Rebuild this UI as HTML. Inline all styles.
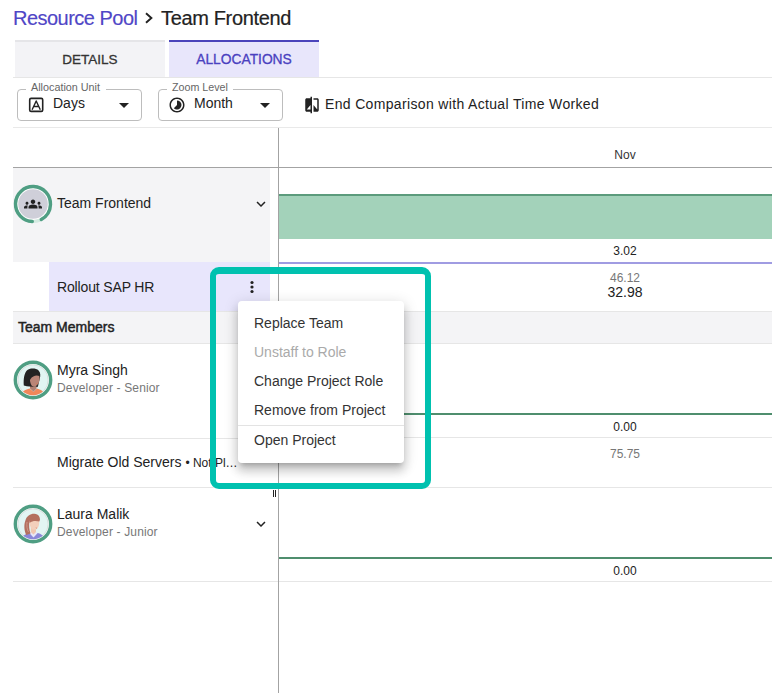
<!DOCTYPE html>
<html><head><meta charset="utf-8">
<style>
*{box-sizing:border-box;margin:0;padding:0}
html,body{width:772px;height:693px;overflow:hidden;background:#fff}
body{position:relative;font-family:"Liberation Sans",sans-serif;color:#222}
.a{position:absolute}
.t{position:absolute;white-space:nowrap;line-height:20px}
.hl{position:absolute;height:1px;background:#e6e6e6}
</style></head><body>

<!-- breadcrumb -->
<div class="t" style="left:13px;top:6px;font-size:20px;line-height:24px;letter-spacing:-0.52px;color:#4f46c6;-webkit-text-stroke:0.15px #4f46c6">Resource Pool</div>
<svg class="a" style="left:143px;top:10px" width="12" height="16" viewBox="0 0 12 16"><path d="M3 3.2 L8.4 8 L3 12.8" fill="none" stroke="#222" stroke-width="1.9"/></svg>
<div class="t" style="left:161px;top:6px;font-size:20px;line-height:24px;letter-spacing:-0.35px;color:#222;-webkit-text-stroke:0.2px #222">Team Frontend</div>

<!-- tabs -->
<div class="a" style="left:15px;top:40px;width:150px;height:37px;background:#f3f3f6;border-top:2px solid #e5e5e8"></div>
<div class="t" style="left:15px;top:50px;width:150px;text-align:center;font-size:13.5px;color:#333;-webkit-text-stroke:0.3px #333">DETAILS</div>
<div class="a" style="left:169px;top:40px;width:150px;height:37px;background:#e8e6fb;border-top:2px solid #4b44bb"></div>
<div class="t" style="left:169px;top:50px;width:150px;text-align:center;font-size:13.8px;color:#4a41c0;-webkit-text-stroke:0.3px #4a41c0">ALLOCATIONS</div>
<div class="hl" style="left:13px;top:77px;width:759px;background:#e6e6e6"></div>

<!-- toolbar -->
<div class="a" style="left:17px;top:89px;width:125px;height:32px;border:1px solid #bdbdbd;border-radius:4px"></div>
<div class="a" style="left:26px;top:85px;width:80px;height:8px;background:#fff"></div>
<div class="t" style="left:31px;top:78.5px;font-size:10.8px;line-height:16px;color:#666">Allocation Unit</div>
<svg class="a" style="left:27px;top:96px" width="18" height="18" viewBox="0 0 18 18"><rect x="2.7" y="2.4" width="13" height="13" rx="1.4" fill="none" stroke="#222" stroke-width="1.6"/><path d="M5.1 13.7 L9.2 5 L13.3 13.7 M6.7 10.5 H11.7" fill="none" stroke="#222" stroke-width="1.4" stroke-linejoin="round"/></svg>
<div class="t" style="left:53px;top:93px;font-size:14px;color:#222">Days</div>
<svg class="a" style="left:119px;top:103px" width="10" height="5" viewBox="0 0 10 5"><path d="M0 0 L10 0 L5 5z" fill="#222"/></svg>

<div class="a" style="left:158px;top:89px;width:125px;height:32px;border:1px solid #bdbdbd;border-radius:4px"></div>
<div class="a" style="left:167px;top:85px;width:66px;height:8px;background:#fff"></div>
<div class="t" style="left:172px;top:78.5px;font-size:10.7px;line-height:16px;color:#666">Zoom Level</div>
<svg class="a" style="left:168px;top:96px" width="18" height="18" viewBox="0 0 24 24"><path fill="#222" d="M16.24 7.76C15.07 6.59 13.54 6 12 6v6l-4.24 4.24c2.34 2.34 6.14 2.34 8.49 0 2.34-2.34 2.34-6.14-.01-8.48zM12 2C6.48 2 2 6.48 2 12s4.48 10 10 10 10-4.48 10-10S17.52 2 12 2zm0 18c-4.42 0-8-3.58-8-8s3.58-8 8-8 8 3.58 8 8-3.58 8-8 8z"/></svg>
<div class="t" style="left:194px;top:93px;font-size:14px;color:#222">Month</div>
<svg class="a" style="left:260px;top:103px" width="10" height="5" viewBox="0 0 10 5"><path d="M0 0 L10 0 L5 5z" fill="#222"/></svg>

<svg class="a" style="left:303px;top:96px" width="18" height="18" viewBox="0 0 24 24"><path fill="#222" d="M10 3H5c-1.11 0-2 .89-2 2v14c0 1.1.89 2 2 2h5v2h2V1h-2v2zm0 15H5l5-6v6zM14 3h5c1.1 0 2 .9 2 2v14c0 1.1-.9 2-2 2h-5v-9l5 6V5h-5z"/></svg>
<div class="t" style="left:325px;top:94px;font-size:14px;letter-spacing:0.34px;color:#222">End Comparison with Actual Time Worked</div>
<div class="hl" style="left:13px;top:127px;width:759px;background:#e9e9e9"></div>

<!-- gantt header -->
<div class="a" style="left:13px;top:167px;width:759px;height:1px;background:#a3a3a3"></div>
<div class="t" style="left:585px;top:145px;width:80px;text-align:center;font-size:12px;color:#333">Nov</div>

<!-- left panel rows -->
<div class="a" style="left:13px;top:168px;width:257px;height:94px;background:#f4f4f6"></div>
<svg class="a" style="left:13px;top:184px" width="40" height="40" viewBox="0 0 40 40">
 <circle cx="20" cy="20" r="16" fill="#fff"/>
 <circle cx="20" cy="20" r="14.8" fill="#cfcfd9"/>
 <circle cx="20" cy="20" r="17.5" fill="none" stroke="#d3eae1" stroke-width="3.2"/>
 <circle cx="20" cy="20" r="17.5" fill="none" stroke="#4f9e83" stroke-width="3.4" stroke-linecap="round" stroke-dasharray="100 9.96" transform="rotate(92.3 20 20)"/>
</svg>
<svg class="a" style="left:24px;top:195px" width="18" height="18" viewBox="0 0 24 24"><path fill="#222" d="M12 12.75c1.63 0 3.07.39 4.24.9 1.08.48 1.760 1.56 1.76 2.73V18H6v-1.61c0-1.18.68-2.26 1.76-2.73 1.17-.52 2.61-.91 4.24-.91zM4 13c1.1 0 2-.9 2-2s-.9-2-2-2-2 .9-2 2 .9 2 2 2zm1.13 1.1c-.37-.06-.74-.1-1.130-.1-.99 0-1.93.21-2.78.58C.48 14.9 0 15.62 0 16.43V18h4.5v-1.61c0-.83.23-1.61.63-2.29zM20 13c1.1 0 2-.9 2-2s-.9-2-2-2-2 .9-2 2 .9 2 2 2zm4 3.43c0-.81-.48-1.53-1.22-1.85-.85-.37-1.79-.58-2.78-.58-.39 0-.76.04-1.13.1.4.68.63 1.46.63 2.29V18H24v-1.57zM12 6c1.66 0 3 1.34 3 3s-1.34 3-3 3-3-1.34-3-3 1.34-3 3-3z"/></svg>
<div class="t" style="left:57px;top:193px;font-size:14px;color:#222">Team Frontend</div>
<svg class="a" style="left:252px;top:195px" width="18" height="18" viewBox="0 0 24 24"><path fill="#222" d="M16.59 8.59L12 13.17 7.41 8.59 6 10l6 6 6-6z"/></svg>

<div class="a" style="left:49px;top:262px;width:221px;height:49px;background:#e8e6fc"></div>
<div class="t" style="left:57px;top:277px;font-size:14px;letter-spacing:-0.15px;color:#222">Rollout SAP HR</div>
<svg class="a" style="left:243px;top:278px" width="18" height="18" viewBox="0 0 18 18"><circle cx="9" cy="4.5" r="1.6" fill="#222"/><circle cx="9" cy="9" r="1.6" fill="#222"/><circle cx="9" cy="13.5" r="1.6" fill="#222"/></svg>

<div class="hl" style="left:13px;top:311px;width:759px"></div>
<div class="a" style="left:13px;top:312px;width:759px;height:31px;background:#f4f4f6"></div>
<div class="hl" style="left:13px;top:343px;width:759px"></div>
<div class="t" style="left:18px;top:317px;font-size:14px;color:#222;-webkit-text-stroke:0.45px #222">Team Members</div>

<!-- Myra -->
<svg class="a" style="left:13px;top:360px" width="40" height="40" viewBox="0 0 40 40">
 <defs><clipPath id="c1"><circle cx="20" cy="20" r="15.2"/></clipPath></defs>
 <circle cx="20" cy="20" r="15.2" fill="#e2f5f3" stroke="#cfcfcf" stroke-width="0.6"/>
 <g clip-path="url(#c1)">
  <path d="M7 38 C8 31.5 12 29.8 16.5 28.6 L20.5 31.8 L24 28.6 C28 29.8 32 31.5 33 38z" fill="#f0875a"/>
  <path d="M17 24 L23.6 24 L23.6 28.6 L20.5 31.8 L17 28.6z" fill="#b08072"/>
  <path d="M10.8 25.6 C10.3 19 11.3 12 14.8 9.8 C18 7.8 23.2 8.3 25.6 10.4 C27.6 12.4 27.6 16 26.8 18.5 L25 26.2 C22 26.8 17 26.8 13.8 26.2z" fill="#232323"/>
  <path d="M16.8 15.5 C18.4 13.2 22.5 12.8 26.2 15 C27 18.5 26.4 22.5 24.6 25.4 C23 27 20.4 27.4 18.8 25.8 C17.4 24 16.4 19.5 16.8 15.5z" fill="#b98577"/>
  <path d="M15 16 C16.5 11.2 22 10 26.7 13 L26.9 16.2 C23.5 15 20 15.4 17.2 19.5 L16.5 22z" fill="#232323"/>
  <path d="M22.8 26.2 L25 24 L24.6 27.2z" fill="#232323"/>
  <path d="M23.3 23.3 L24.6 23.8 L23.6 24.5z" fill="#e0703a"/>
 </g>
 <circle cx="20" cy="20" r="17.7" fill="none" stroke="#4f9e83" stroke-width="3.4"/>
</svg>
<div class="t" style="left:57px;top:360px;font-size:14px;color:#222">Myra Singh</div>
<div class="t" style="left:57px;top:378px;font-size:12px;letter-spacing:0.15px;color:#777">Developer - Senior</div>
<div class="hl" style="left:49px;top:438px;width:221px"></div>
<div class="t" style="left:57px;top:452px;font-size:14px;color:#222">Migrate Old Servers <span style="font-size:12px">• Not Pl…</span></div>
<div class="hl" style="left:13px;top:487px;width:759px"></div>

<!-- Laura -->
<svg class="a" style="left:13px;top:504px" width="40" height="40" viewBox="0 0 40 40">
 <defs><clipPath id="c2"><circle cx="20" cy="20" r="15.2"/></clipPath></defs>
 <circle cx="20" cy="20" r="15.2" fill="#e2f5f3" stroke="#cfcfcf" stroke-width="0.6"/>
 <g clip-path="url(#c2)">
  <path d="M7 38 C8 32 12 30 16.5 29 L20.5 33 L24.5 29 C28.5 30 32 32 33 38z" fill="#8b87d8"/>
  <path d="M16.5 29 L20.5 33.5 L24.5 29 L23 27.5 L18 27.5z" fill="#e7e6f6"/>
  <path d="M17.8 24 L23 24 L23 28 L20.5 30.5 L17.8 28z" fill="#f0c7b0"/>
  <path d="M13.2 31 C10.8 26 11 20 12.4 16.5 C13.6 12 17.5 9.6 21.5 9.8 C25.5 10.2 27.4 13 26.8 16.5 L16.5 17.5 C15.8 21.5 16.2 26 17.6 29.5z" fill="#b4705f"/>
  <path d="M16.6 17 C18.8 15.2 23 15 26 16.2 C26.6 19.2 26 22.2 24.4 24.6 C22.8 26.2 20.2 26.2 18.6 24.8 C17 23.2 16.3 19.8 16.6 17z" fill="#f3cfbb"/>
  <path d="M16.3 17 C18.3 13 24 12.3 26.6 15 L26.4 17.6 C23.2 16.6 19.6 16.4 16.6 19z" fill="#b4705f"/>
  <path d="M14 18 C13.5 21 14 26 15.5 28" fill="none" stroke="#d8a898" stroke-width="0.7"/>
  <path d="M22.6 23.6 L24.3 23.9 L23.2 24.5z" fill="#d06a50"/>
 </g>
 <circle cx="20" cy="20" r="17.7" fill="none" stroke="#4f9e83" stroke-width="3.4"/>
</svg>
<div class="t" style="left:57px;top:504px;font-size:14px;color:#222">Laura Malik</div>
<div class="t" style="left:57px;top:522px;font-size:12px;letter-spacing:0.15px;color:#777">Developer - Junior</div>
<svg class="a" style="left:252px;top:515px" width="18" height="18" viewBox="0 0 24 24"><path fill="#222" d="M16.59 8.59L12 13.17 7.41 8.59 6 10l6 6 6-6z"/></svg>
<div class="hl" style="left:13px;top:581px;width:759px"></div>

<!-- right gantt -->
<div class="a" style="left:279px;top:194px;width:493px;height:45px;background:#a3d2ba;border-top:2px solid #5c9b7c"></div>
<div class="t" style="left:585px;top:241px;width:80px;text-align:center;font-size:12px;color:#222">3.02</div>
<div class="a" style="left:279px;top:262px;width:493px;height:2px;background:#a09ce2"></div>
<div class="t" style="left:585px;top:268px;width:80px;text-align:center;font-size:12px;color:#777">46.12</div>
<div class="t" style="left:585px;top:282px;width:80px;text-align:center;font-size:14px;color:#222">32.98</div>
<div class="a" style="left:279px;top:413px;width:493px;height:2px;background:#4f8e6e"></div>
<div class="t" style="left:585px;top:417px;width:80px;text-align:center;font-size:12px;color:#222">0.00</div>
<div class="hl" style="left:279px;top:437px;width:493px"></div>
<div class="t" style="left:585px;top:444px;width:80px;text-align:center;font-size:12px;color:#777">75.75</div>
<div class="a" style="left:279px;top:557px;width:493px;height:2px;background:#4f8e6e"></div>
<div class="t" style="left:585px;top:561px;width:80px;text-align:center;font-size:12px;color:#222">0.00</div>

<div class="a" style="left:278px;top:128px;width:1px;height:565px;background:#a3a3a3"></div>
<div class="a" style="left:273px;top:490px;width:1px;height:7px;background:#222"></div>
<div class="a" style="left:275px;top:490px;width:1px;height:7px;background:#222"></div>

<!-- menu -->
<div class="a" style="left:238px;top:301px;width:166px;height:162px;background:#fff;border-radius:4px;box-shadow:0 5px 5px -3px rgba(0,0,0,.2),0 8px 10px 1px rgba(0,0,0,.14),0 3px 14px 2px rgba(0,0,0,.12)"></div>
<div class="t" style="left:254px;top:313px;font-size:14px;color:#333">Replace Team</div>
<div class="t" style="left:254px;top:342px;font-size:14px;color:#aaa">Unstaff to Role</div>
<div class="t" style="left:254px;top:371px;font-size:14px;color:#333">Change Project Role</div>
<div class="t" style="left:254px;top:400px;font-size:14px;color:#333">Remove from Project</div>
<div class="a" style="left:238px;top:425px;width:166px;height:1px;background:#e3e3e3"></div>
<div class="t" style="left:254px;top:430px;font-size:14px;color:#333">Open Project</div>

<!-- teal highlight -->
<div class="a" style="left:210px;top:267px;width:221px;height:222px;border:6px solid #00c1af;border-top-width:7px;border-radius:9px"></div>

</body></html>
